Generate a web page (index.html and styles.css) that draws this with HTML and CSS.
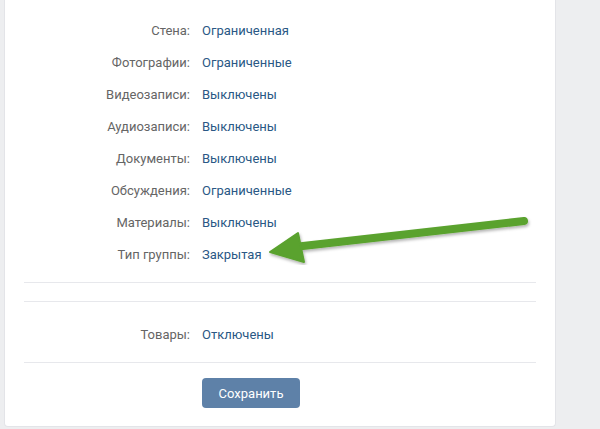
FILE: index.html
```html
<!DOCTYPE html>
<html lang="ru">
<head>
    <meta charset="UTF-8">
    <meta name="viewport" content="width=device-width, initial-scale=1.0">
    <title>Настройки разделов</title>
    <link rel="stylesheet" href="styles.css">
</head>
<body>

    <div class="page">
        <div class="card">
            <div class="rows">
                <div class="row"><span class="label">Стена:</span><a class="value" href="#">Ограниченная</a></div>
                <div class="row"><span class="label">Фотографии:</span><a class="value" href="#">Ограниченные</a></div>
                <div class="row"><span class="label">Видеозаписи:</span><a class="value" href="#">Выключены</a></div>
                <div class="row"><span class="label">Аудиозаписи:</span><a class="value" href="#">Выключены</a></div>
                <div class="row"><span class="label">Документы:</span><a class="value" href="#">Выключены</a></div>
                <div class="row"><span class="label">Обсуждения:</span><a class="value" href="#">Ограниченные</a></div>
                <div class="row"><span class="label">Материалы:</span><a class="value" href="#">Выключены</a></div>
                <div class="row"><span class="label">Тип группы:</span><a class="value" href="#">Закрытая</a></div>
            </div>

            <div class="divider first"></div>
            <div class="divider"></div>

            <div class="rows goods">
                <div class="row"><span class="label">Товары:</span><a class="value" href="#">Отключены</a></div>
            </div>

            <div class="divider"></div>

            <div class="actions">
                <button type="button" class="save">Сохранить</button>
            </div>

            <!-- green arrow pointing at group type -->
            <svg class="arrow" width="280" height="54" viewBox="0 0 280 54">
                <defs>
                    <filter id="shadow" x="-10%" y="-50%" width="120%" height="200%">
                        <feDropShadow dx="1" dy="2" stdDeviation="1.5" flood-color="#000" flood-opacity="0.3"/>
                    </filter>
                </defs>
                <g filter="url(#shadow)" fill="#5aa22e" stroke="#5aa22e">
                    <line x1="28" y1="36" x2="258" y2="10" stroke-width="8" stroke-linecap="round"/>
                    <polygon points="4,41 32,22 38,51" stroke-width="2" stroke-linejoin="round"/>
                </g>
            </svg>
        </div>
    </div>

</body>
</html>
```

FILE: styles.css
```css
body {
    margin: 0;
    padding: 0;
    background-color: #edeef0;
    font-family: Roboto, "Open Sans", Arial, sans-serif;
    font-size: 13px;
}

.page {
    padding-left: 4px;
}

.card {
    position: relative;
    width: 552px;
    height: 427px;
    box-sizing: border-box;
    background-color: #fff;
    border: 1px solid #e3e4e8;
    border-top: none;
    border-radius: 0 0 4px 4px;
    padding: 14px 19px 0 19px;
}

.row {
    display: flex;
    height: 32px;
    align-items: center;
}

.label {
    width: 166px;
    text-align: right;
    color: #656565;
    padding-right: 12px;
}

.value {
    color: #2a5885;
    text-decoration: none;
}

.divider {
    height: 1px;
    background-color: #e7e8ec;
}

.divider.first {
    margin-top: 12px;
    margin-bottom: 18px;
}

.goods {
    margin-top: 16px;
    margin-bottom: 12px;
}

.actions {
    padding-left: 178px;
    padding-top: 15px;
}

.save {
    width: 98px;
    height: 30px;
    background-color: #5e81a8;
    color: #fff;
    border: none;
    border-radius: 4px;
    font-family: Roboto, "Open Sans", Arial, sans-serif;
    font-size: 13px;
    cursor: pointer;
}

.arrow {
    position: absolute;
    left: 261px;
    top: 211px;
}
```
